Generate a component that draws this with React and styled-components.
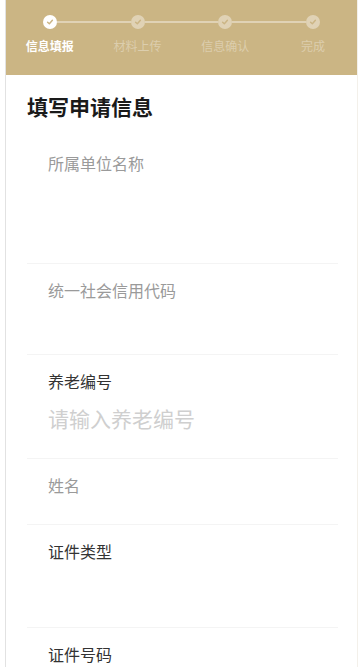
import React from "react";
import styled, { createGlobalStyle } from "styled-components";

const GlobalStyle = createGlobalStyle`
    body {
        margin:0;
        background:#fff;
        font-family:"Noto Sans", "Noto Sans CJK SC", sans-serif;
    }
`;

const Page = styled.div`
    margin-left:5px;
    width:351px;
    height:667px;
    overflow:hidden;
    border-left:1px solid #e2e2e2;
    border-right:1px solid #f3f0ea;
    background:#fff;
`;

const Header = styled.div`
    height:75px;
    background-color:#cbb584;
    padding-top:15px;
    box-sizing:border-box;
`;

const Track = styled.div`
    display:flex;
    align-items:center;
    padding:0 37px;
    height:14px;
`;

const Dot = styled.div`
    width:14px;
    height:14px;
    border-radius:50%;
    flex-shrink:0;
    display:flex;
    align-items:center;
    justify-content:center;
    background-color:${props => props.active ? "#ffffff" : "rgba(255,255,255,0.4)"};
`;

const Line = styled.div`
    flex:1;
    height:2px;
    background-color:rgba(255,255,255,0.4);
`;

const Labels = styled.div`
    display:grid;
    grid-template-columns:repeat(4, 1fr);
    margin-top:10px;
`;

const StepLabel = styled.span`
    text-align:center;
    font-size:12px;
    line-height:16px;
    font-weight:${props => props.active ? 600 : 400};
    color:${props => props.active ? "#ffffff" : "rgba(255,255,255,0.35)"};
`;

const Title = styled.h3`
    margin:0;
    padding:17px 0 15px 21px;
    font-size:21px;
    line-height:30px;
    font-weight:700;
    color:#1a1a1a;
`;

const Field = styled.div`
    margin:0 19px 0 21px;
    padding:16px 0 0 21px;
    border-bottom:${props => props.last ? "none" : "1px solid #f4f4f4"};
`;

const Label = styled.div`
    font-size:16px;
    line-height:22px;
    color:${props => props.muted ? "#9a9a9a" : "#333333"};
`;

const Body = styled.div`
    height:${props => props.space}px;
    padding-top:${props => props.inset || 0}px;
    box-sizing:border-box;
`;

const Input = styled.input`
    display:block;
    width:100%;
    height:36px;
    padding:0;
    border:none;
    outline:none;
    font-family:inherit;
    font-size:21px;
    color:#333;
    background:transparent;
    &::placeholder {
        color:#cfcfcf;
    }
`;

const steps = ["信息填报", "材料上传", "信息确认", "完成"];

const fields = [
    { label: "所属单位名称", muted: true, space: 88 },
    { label: "统一社会信用代码", muted: true, space: 52 },
    { label: "养老编号", placeholder: "请输入养老编号", space: 65 },
    { label: "姓名", muted: true, space: 27 },
    { label: "证件类型", space: 64 },
    { label: "证件号码", space: 0, last: true }
];

const Check = () => (
    <svg width="8" height="8" viewBox="0 0 10 10">
        <path d="M2 5.2 L4.2 7.2 L8 2.8" fill="none" stroke="#cbb584" strokeWidth="1.8" strokeLinecap="round" strokeLinejoin="round" />
    </svg>
);

const App = () => (
    <>
        <GlobalStyle />
        <Page>
            <Header>
                <Track>
                    {steps.map((step, index) => (
                        <React.Fragment key={step}>
                            <Dot active={index === 0}><Check /></Dot>
                            {index < steps.length - 1 && <Line />}
                        </React.Fragment>
                    ))}
                </Track>
                <Labels>
                    {steps.map((step, index) => (
                        <StepLabel key={step} active={index === 0}>{step}</StepLabel>
                    ))}
                </Labels>
            </Header>
            <Title>填写申请信息</Title>
            {fields.map(field => (
                <Field key={field.label} last={field.last}>
                    <Label muted={field.muted}>{field.label}</Label>
                    {field.placeholder ? (
                        <Body space={field.space} inset={8}>
                            <Input placeholder={field.placeholder} />
                        </Body>
                    ) : (
                        <Body space={field.space} />
                    )}
                </Field>
            ))}
        </Page>
    </>
);

export default App;
